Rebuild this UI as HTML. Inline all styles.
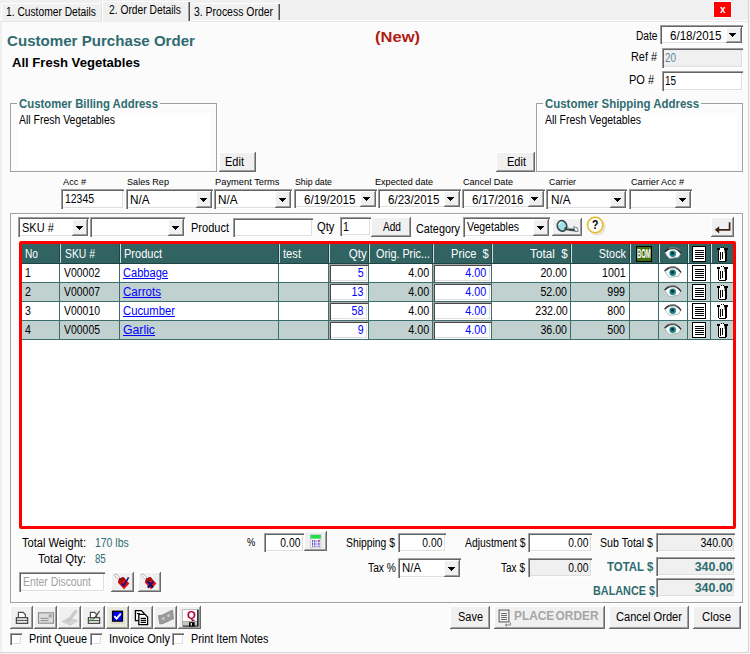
<!DOCTYPE html><html><head><meta charset="utf-8"><title>Customer Purchase Order</title><style>
html,body{margin:0;padding:0}body{width:750px;height:654px;position:relative;overflow:hidden;background:#f0f0f0;font-family:"Liberation Sans", sans-serif;font-size:12px}
#w div,#w svg,#w span{position:absolute;box-sizing:border-box}#w span{white-space:nowrap;line-height:1;transform-origin:0 0}
</style></head><body><div id="w">
<div style="left:0px;top:0px;width:750px;height:654px;background:#f0f0f0;"></div>
<div style="left:2px;top:22px;width:746px;height:630px;background:#fbfbfb;"></div>
<div style="left:0px;top:20px;width:748px;height:1px;background:#fff;"></div>
<div style="left:0px;top:21px;width:748px;height:1px;background:#e6e6e6;"></div>
<div style="left:748px;top:0px;width:1px;height:653px;background:#d4d4d4;"></div>
<div style="left:0px;top:652px;width:749px;height:1px;background:#d4d4d4;"></div>
<div style="left:749px;top:0px;width:1px;height:654px;background:#f6f6f6;"></div>
<div style="left:0px;top:653px;width:750px;height:1px;background:#f6f6f6;"></div>
<div style="left:1px;top:3px;width:101px;height:18px;background:#f0f0f0;border-top:1px solid #fff;border-left:1px solid #fff;border-right:1px solid #e0e0e0;"></div>
<div style="left:102px;top:1px;width:88px;height:21px;background:#f0f0f0;border-top:1px solid #fff;border-left:1px solid #fff;"></div>
<div style="left:188px;top:2px;width:1px;height:19px;background:#a0a0a0;"></div>
<div style="left:189px;top:2px;width:1px;height:19px;background:#505050;"></div>
<div style="left:190px;top:3px;width:90px;height:17px;background:#f0f0f0;border-top:1px solid #fff;"></div>
<div style="left:278px;top:4px;width:1px;height:16px;background:#a0a0a0;"></div>
<div style="left:279px;top:4px;width:1px;height:16px;background:#505050;"></div>
<div style="left:713px;top:1px;width:19px;height:17px;background:#ff0000;border:1px solid #fff;"></div>
<div style="left:660px;top:25px;width:83px;height:19px;background:#fff;box-shadow:inset 1px 1px 0 #a0a0a0, inset 2px 2px 0 #646464, inset -1px -1px 0 #fff, inset -2px -2px 0 #dedede;"></div>
<div style="left:726px;top:27px;width:16px;height:16px;background:#f0f0f0;box-shadow:inset -1px -1px 0 #696969, inset 1px 1px 0 #fff, inset -2px -2px 0 #a0a0a0;"></div>
<svg style="left:729px;top:33px" width="7" height="4" viewBox="0 0 7 4" shape-rendering="crispEdges"><path d="M0 0h7v1h-7zM1 1h5v1h-5zM2 2h3v1h-3zM3 3h1v1h-1z" fill="#000"/></svg>
<div style="left:662px;top:48px;width:81px;height:20px;background:#f0f0f0;box-shadow:inset 1px 1px 0 #a0a0a0, inset 2px 2px 0 #646464, inset -1px -1px 0 #fff, inset -2px -2px 0 #dedede;"></div>
<div style="left:662px;top:71px;width:81px;height:20px;background:#fff;box-shadow:inset 1px 1px 0 #a0a0a0, inset 2px 2px 0 #646464, inset -1px -1px 0 #fff, inset -2px -2px 0 #dedede;"></div>
<div style="left:10px;top:103px;width:207px;height:69px;border:1px solid #a0a0a0;box-shadow:inset 1px 1px 0 #fff, 1px 1px 0 #fff;"></div>
<div style="left:17px;top:97px;width:143px;height:12px;background:#fbfbfb;"></div>
<div style="left:17px;top:113px;width:193px;height:56px;background:#fff;"></div>
<div style="left:536px;top:103px;width:207px;height:69px;border:1px solid #a0a0a0;box-shadow:inset 1px 1px 0 #fff, 1px 1px 0 #fff;"></div>
<div style="left:543px;top:97px;width:158px;height:12px;background:#fbfbfb;"></div>
<div style="left:543px;top:113px;width:194px;height:56px;background:#fff;"></div>
<div style="left:219px;top:152px;width:37px;height:20px;background:#f0f0f0;box-shadow:inset -1px -1px 0 #696969, inset 1px 1px 0 #fff, inset -2px -2px 0 #a0a0a0;"></div>
<div style="left:496px;top:152px;width:39px;height:20px;background:#f0f0f0;box-shadow:inset -1px -1px 0 #696969, inset 1px 1px 0 #fff, inset -2px -2px 0 #a0a0a0;"></div>
<div style="left:61px;top:189px;width:63px;height:20px;background:#fff;box-shadow:inset 1px 1px 0 #a0a0a0, inset 2px 2px 0 #646464, inset -1px -1px 0 #fff, inset -2px -2px 0 #dedede;"></div>
<div style="left:126px;top:189px;width:87px;height:20px;background:#fff;box-shadow:inset 1px 1px 0 #a0a0a0, inset 2px 2px 0 #646464, inset -1px -1px 0 #fff, inset -2px -2px 0 #dedede;"></div>
<div style="left:196px;top:191px;width:16px;height:17px;background:#f0f0f0;box-shadow:inset -1px -1px 0 #696969, inset 1px 1px 0 #fff, inset -2px -2px 0 #a0a0a0;"></div>
<svg style="left:200px;top:198px" width="7" height="4" viewBox="0 0 7 4" shape-rendering="crispEdges"><path d="M0 0h7v1h-7zM1 1h5v1h-5zM2 2h3v1h-3zM3 3h1v1h-1z" fill="#000"/></svg>
<div style="left:214px;top:189px;width:78px;height:20px;background:#fff;box-shadow:inset 1px 1px 0 #a0a0a0, inset 2px 2px 0 #646464, inset -1px -1px 0 #fff, inset -2px -2px 0 #dedede;"></div>
<div style="left:275px;top:191px;width:16px;height:17px;background:#f0f0f0;box-shadow:inset -1px -1px 0 #696969, inset 1px 1px 0 #fff, inset -2px -2px 0 #a0a0a0;"></div>
<svg style="left:279px;top:198px" width="7" height="4" viewBox="0 0 7 4" shape-rendering="crispEdges"><path d="M0 0h7v1h-7zM1 1h5v1h-5zM2 2h3v1h-3zM3 3h1v1h-1z" fill="#000"/></svg>
<div style="left:294px;top:189px;width:83px;height:19px;background:#fff;box-shadow:inset 1px 1px 0 #a0a0a0, inset 2px 2px 0 #646464, inset -1px -1px 0 #fff, inset -2px -2px 0 #dedede;"></div>
<div style="left:360px;top:191px;width:16px;height:16px;background:#f0f0f0;box-shadow:inset -1px -1px 0 #696969, inset 1px 1px 0 #fff, inset -2px -2px 0 #a0a0a0;"></div>
<svg style="left:363px;top:197px" width="7" height="4" viewBox="0 0 7 4" shape-rendering="crispEdges"><path d="M0 0h7v1h-7zM1 1h5v1h-5zM2 2h3v1h-3zM3 3h1v1h-1z" fill="#000"/></svg>
<div style="left:378px;top:189px;width:83px;height:19px;background:#fff;box-shadow:inset 1px 1px 0 #a0a0a0, inset 2px 2px 0 #646464, inset -1px -1px 0 #fff, inset -2px -2px 0 #dedede;"></div>
<div style="left:444px;top:191px;width:16px;height:16px;background:#f0f0f0;box-shadow:inset -1px -1px 0 #696969, inset 1px 1px 0 #fff, inset -2px -2px 0 #a0a0a0;"></div>
<svg style="left:447px;top:197px" width="7" height="4" viewBox="0 0 7 4" shape-rendering="crispEdges"><path d="M0 0h7v1h-7zM1 1h5v1h-5zM2 2h3v1h-3zM3 3h1v1h-1z" fill="#000"/></svg>
<div style="left:462px;top:189px;width:83px;height:19px;background:#fff;box-shadow:inset 1px 1px 0 #a0a0a0, inset 2px 2px 0 #646464, inset -1px -1px 0 #fff, inset -2px -2px 0 #dedede;"></div>
<div style="left:528px;top:191px;width:16px;height:16px;background:#f0f0f0;box-shadow:inset -1px -1px 0 #696969, inset 1px 1px 0 #fff, inset -2px -2px 0 #a0a0a0;"></div>
<svg style="left:531px;top:197px" width="7" height="4" viewBox="0 0 7 4" shape-rendering="crispEdges"><path d="M0 0h7v1h-7zM1 1h5v1h-5zM2 2h3v1h-3zM3 3h1v1h-1z" fill="#000"/></svg>
<div style="left:546px;top:189px;width:81px;height:20px;background:#fff;box-shadow:inset 1px 1px 0 #a0a0a0, inset 2px 2px 0 #646464, inset -1px -1px 0 #fff, inset -2px -2px 0 #dedede;"></div>
<div style="left:610px;top:191px;width:16px;height:17px;background:#f0f0f0;box-shadow:inset -1px -1px 0 #696969, inset 1px 1px 0 #fff, inset -2px -2px 0 #a0a0a0;"></div>
<svg style="left:614px;top:198px" width="7" height="4" viewBox="0 0 7 4" shape-rendering="crispEdges"><path d="M0 0h7v1h-7zM1 1h5v1h-5zM2 2h3v1h-3zM3 3h1v1h-1z" fill="#000"/></svg>
<div style="left:629px;top:189px;width:63px;height:20px;background:#fff;box-shadow:inset 1px 1px 0 #a0a0a0, inset 2px 2px 0 #646464, inset -1px -1px 0 #fff, inset -2px -2px 0 #dedede;"></div>
<div style="left:675px;top:191px;width:16px;height:17px;background:#f0f0f0;box-shadow:inset -1px -1px 0 #696969, inset 1px 1px 0 #fff, inset -2px -2px 0 #a0a0a0;"></div>
<svg style="left:679px;top:198px" width="7" height="4" viewBox="0 0 7 4" shape-rendering="crispEdges"><path d="M0 0h7v1h-7zM1 1h5v1h-5zM2 2h3v1h-3zM3 3h1v1h-1z" fill="#000"/></svg>
<div style="left:10px;top:213px;width:733px;height:390px;border:1px solid #a0a0a0;box-shadow:inset 1px 1px 0 #fff, 1px 1px 0 #fff;"></div>
<div style="left:18px;top:217px;width:71px;height:20px;background:#fff;box-shadow:inset 1px 1px 0 #a0a0a0, inset 2px 2px 0 #646464, inset -1px -1px 0 #fff, inset -2px -2px 0 #dedede;"></div>
<div style="left:72px;top:219px;width:16px;height:17px;background:#f0f0f0;box-shadow:inset -1px -1px 0 #696969, inset 1px 1px 0 #fff, inset -2px -2px 0 #a0a0a0;"></div>
<svg style="left:76px;top:226px" width="7" height="4" viewBox="0 0 7 4" shape-rendering="crispEdges"><path d="M0 0h7v1h-7zM1 1h5v1h-5zM2 2h3v1h-3zM3 3h1v1h-1z" fill="#000"/></svg>
<div style="left:90px;top:217px;width:95px;height:20px;background:#fff;box-shadow:inset 1px 1px 0 #a0a0a0, inset 2px 2px 0 #646464, inset -1px -1px 0 #fff, inset -2px -2px 0 #dedede;"></div>
<div style="left:168px;top:219px;width:16px;height:17px;background:#f0f0f0;box-shadow:inset -1px -1px 0 #696969, inset 1px 1px 0 #fff, inset -2px -2px 0 #a0a0a0;"></div>
<svg style="left:172px;top:226px" width="7" height="4" viewBox="0 0 7 4" shape-rendering="crispEdges"><path d="M0 0h7v1h-7zM1 1h5v1h-5zM2 2h3v1h-3zM3 3h1v1h-1z" fill="#000"/></svg>
<div style="left:233px;top:218px;width:80px;height:19px;background:#fff;box-shadow:inset 1px 1px 0 #a0a0a0, inset 2px 2px 0 #646464, inset -1px -1px 0 #fff, inset -2px -2px 0 #dedede;"></div>
<div style="left:340px;top:217px;width:31px;height:19px;background:#fff;box-shadow:inset 1px 1px 0 #a0a0a0, inset 2px 2px 0 #646464, inset -1px -1px 0 #fff, inset -2px -2px 0 #dedede;"></div>
<div style="left:371px;top:217px;width:40px;height:20px;background:#f0f0f0;box-shadow:inset -1px -1px 0 #696969, inset 1px 1px 0 #fff, inset -2px -2px 0 #a0a0a0;"></div>
<div style="left:463px;top:217px;width:87px;height:20px;background:#fff;box-shadow:inset 1px 1px 0 #a0a0a0, inset 2px 2px 0 #646464, inset -1px -1px 0 #fff, inset -2px -2px 0 #dedede;"></div>
<div style="left:533px;top:219px;width:16px;height:17px;background:#f0f0f0;box-shadow:inset -1px -1px 0 #696969, inset 1px 1px 0 #fff, inset -2px -2px 0 #a0a0a0;"></div>
<svg style="left:537px;top:226px" width="7" height="4" viewBox="0 0 7 4" shape-rendering="crispEdges"><path d="M0 0h7v1h-7zM1 1h5v1h-5zM2 2h3v1h-3zM3 3h1v1h-1z" fill="#000"/></svg>
<div style="left:552px;top:218px;width:30px;height:18px;background:#f0f0f0;box-shadow:inset -1px -1px 0 #696969, inset 1px 1px 0 #fff, inset -2px -2px 0 #a0a0a0;"></div>
<div style="left:711px;top:217px;width:23px;height:20px;background:#f0f0f0;box-shadow:inset -1px -1px 0 #696969, inset 1px 1px 0 #fff, inset -2px -2px 0 #a0a0a0;"></div>
<div style="left:19px;top:241px;width:717px;height:288px;background:#fff;border:3px solid #ff0000;border-radius:2px;"></div>
<div style="left:22px;top:244px;width:711px;height:20px;background:#316363;border-bottom:1px solid #1f4444;"></div>
<div style="left:59px;top:244px;width:1px;height:19px;background:#1f4444;"></div>
<div style="left:60px;top:244px;width:1px;height:19px;background:#cfdcdc;"></div>
<div style="left:119px;top:244px;width:1px;height:19px;background:#1f4444;"></div>
<div style="left:120px;top:244px;width:1px;height:19px;background:#cfdcdc;"></div>
<div style="left:278px;top:244px;width:1px;height:19px;background:#1f4444;"></div>
<div style="left:279px;top:244px;width:1px;height:19px;background:#cfdcdc;"></div>
<div style="left:328px;top:244px;width:1px;height:19px;background:#1f4444;"></div>
<div style="left:329px;top:244px;width:1px;height:19px;background:#cfdcdc;"></div>
<div style="left:368px;top:244px;width:1px;height:19px;background:#1f4444;"></div>
<div style="left:369px;top:244px;width:1px;height:19px;background:#cfdcdc;"></div>
<div style="left:432px;top:244px;width:1px;height:19px;background:#1f4444;"></div>
<div style="left:433px;top:244px;width:1px;height:19px;background:#cfdcdc;"></div>
<div style="left:491px;top:244px;width:1px;height:19px;background:#1f4444;"></div>
<div style="left:492px;top:244px;width:1px;height:19px;background:#cfdcdc;"></div>
<div style="left:570px;top:244px;width:1px;height:19px;background:#1f4444;"></div>
<div style="left:571px;top:244px;width:1px;height:19px;background:#cfdcdc;"></div>
<div style="left:629px;top:244px;width:1px;height:19px;background:#1f4444;"></div>
<div style="left:630px;top:244px;width:1px;height:19px;background:#cfdcdc;"></div>
<div style="left:658px;top:244px;width:1px;height:19px;background:#1f4444;"></div>
<div style="left:659px;top:244px;width:1px;height:19px;background:#cfdcdc;"></div>
<div style="left:687px;top:244px;width:1px;height:19px;background:#1f4444;"></div>
<div style="left:688px;top:244px;width:1px;height:19px;background:#cfdcdc;"></div>
<div style="left:710px;top:244px;width:1px;height:19px;background:#1f4444;"></div>
<div style="left:711px;top:244px;width:1px;height:19px;background:#cfdcdc;"></div>
<div style="left:22px;top:264px;width:711px;height:19px;background:#fff;border-bottom:1px solid #3b6d6d;"></div>
<div style="left:59px;top:264px;width:1px;height:19px;background:#3b6d6d;"></div>
<div style="left:119px;top:264px;width:1px;height:19px;background:#3b6d6d;"></div>
<div style="left:278px;top:264px;width:1px;height:19px;background:#3b6d6d;"></div>
<div style="left:328px;top:264px;width:1px;height:19px;background:#3b6d6d;"></div>
<div style="left:368px;top:264px;width:1px;height:19px;background:#3b6d6d;"></div>
<div style="left:432px;top:264px;width:1px;height:19px;background:#3b6d6d;"></div>
<div style="left:491px;top:264px;width:1px;height:19px;background:#3b6d6d;"></div>
<div style="left:570px;top:264px;width:1px;height:19px;background:#3b6d6d;"></div>
<div style="left:629px;top:264px;width:1px;height:19px;background:#3b6d6d;"></div>
<div style="left:658px;top:264px;width:1px;height:19px;background:#3b6d6d;"></div>
<div style="left:687px;top:264px;width:1px;height:19px;background:#3b6d6d;"></div>
<div style="left:710px;top:264px;width:1px;height:19px;background:#3b6d6d;"></div>
<div style="left:329px;top:264px;width:39px;height:18px;background:#fff;box-shadow:inset 1px 1px 0 #a8a8a8, inset 2px 2px 0 #484848, inset -1px -1px 0 #fff, inset -2px -2px 0 #dedede;"></div>
<div style="left:433px;top:264px;width:58px;height:18px;background:#fff;box-shadow:inset 1px 1px 0 #a8a8a8, inset 2px 2px 0 #484848, inset -1px -1px 0 #fff, inset -2px -2px 0 #dedede;"></div>
<div style="left:22px;top:283px;width:711px;height:19px;background:#c1d1d0;border-bottom:1px solid #3b6d6d;"></div>
<div style="left:59px;top:283px;width:1px;height:19px;background:#3b6d6d;"></div>
<div style="left:119px;top:283px;width:1px;height:19px;background:#3b6d6d;"></div>
<div style="left:278px;top:283px;width:1px;height:19px;background:#3b6d6d;"></div>
<div style="left:328px;top:283px;width:1px;height:19px;background:#3b6d6d;"></div>
<div style="left:368px;top:283px;width:1px;height:19px;background:#3b6d6d;"></div>
<div style="left:432px;top:283px;width:1px;height:19px;background:#3b6d6d;"></div>
<div style="left:491px;top:283px;width:1px;height:19px;background:#3b6d6d;"></div>
<div style="left:570px;top:283px;width:1px;height:19px;background:#3b6d6d;"></div>
<div style="left:629px;top:283px;width:1px;height:19px;background:#3b6d6d;"></div>
<div style="left:658px;top:283px;width:1px;height:19px;background:#3b6d6d;"></div>
<div style="left:687px;top:283px;width:1px;height:19px;background:#3b6d6d;"></div>
<div style="left:710px;top:283px;width:1px;height:19px;background:#3b6d6d;"></div>
<div style="left:329px;top:283px;width:39px;height:18px;background:#fff;box-shadow:inset 1px 1px 0 #a8a8a8, inset 2px 2px 0 #484848, inset -1px -1px 0 #fff, inset -2px -2px 0 #dedede;"></div>
<div style="left:433px;top:283px;width:58px;height:18px;background:#fff;box-shadow:inset 1px 1px 0 #a8a8a8, inset 2px 2px 0 #484848, inset -1px -1px 0 #fff, inset -2px -2px 0 #dedede;"></div>
<div style="left:22px;top:302px;width:711px;height:19px;background:#fff;border-bottom:1px solid #3b6d6d;"></div>
<div style="left:59px;top:302px;width:1px;height:19px;background:#3b6d6d;"></div>
<div style="left:119px;top:302px;width:1px;height:19px;background:#3b6d6d;"></div>
<div style="left:278px;top:302px;width:1px;height:19px;background:#3b6d6d;"></div>
<div style="left:328px;top:302px;width:1px;height:19px;background:#3b6d6d;"></div>
<div style="left:368px;top:302px;width:1px;height:19px;background:#3b6d6d;"></div>
<div style="left:432px;top:302px;width:1px;height:19px;background:#3b6d6d;"></div>
<div style="left:491px;top:302px;width:1px;height:19px;background:#3b6d6d;"></div>
<div style="left:570px;top:302px;width:1px;height:19px;background:#3b6d6d;"></div>
<div style="left:629px;top:302px;width:1px;height:19px;background:#3b6d6d;"></div>
<div style="left:658px;top:302px;width:1px;height:19px;background:#3b6d6d;"></div>
<div style="left:687px;top:302px;width:1px;height:19px;background:#3b6d6d;"></div>
<div style="left:710px;top:302px;width:1px;height:19px;background:#3b6d6d;"></div>
<div style="left:329px;top:302px;width:39px;height:18px;background:#fff;box-shadow:inset 1px 1px 0 #a8a8a8, inset 2px 2px 0 #484848, inset -1px -1px 0 #fff, inset -2px -2px 0 #dedede;"></div>
<div style="left:433px;top:302px;width:58px;height:18px;background:#fff;box-shadow:inset 1px 1px 0 #a8a8a8, inset 2px 2px 0 #484848, inset -1px -1px 0 #fff, inset -2px -2px 0 #dedede;"></div>
<div style="left:22px;top:321px;width:711px;height:19px;background:#c1d1d0;border-bottom:1px solid #3b6d6d;"></div>
<div style="left:59px;top:321px;width:1px;height:19px;background:#3b6d6d;"></div>
<div style="left:119px;top:321px;width:1px;height:19px;background:#3b6d6d;"></div>
<div style="left:278px;top:321px;width:1px;height:19px;background:#3b6d6d;"></div>
<div style="left:328px;top:321px;width:1px;height:19px;background:#3b6d6d;"></div>
<div style="left:368px;top:321px;width:1px;height:19px;background:#3b6d6d;"></div>
<div style="left:432px;top:321px;width:1px;height:19px;background:#3b6d6d;"></div>
<div style="left:491px;top:321px;width:1px;height:19px;background:#3b6d6d;"></div>
<div style="left:570px;top:321px;width:1px;height:19px;background:#3b6d6d;"></div>
<div style="left:629px;top:321px;width:1px;height:19px;background:#3b6d6d;"></div>
<div style="left:658px;top:321px;width:1px;height:19px;background:#3b6d6d;"></div>
<div style="left:687px;top:321px;width:1px;height:19px;background:#3b6d6d;"></div>
<div style="left:710px;top:321px;width:1px;height:19px;background:#3b6d6d;"></div>
<div style="left:329px;top:321px;width:39px;height:18px;background:#fff;box-shadow:inset 1px 1px 0 #a8a8a8, inset 2px 2px 0 #484848, inset -1px -1px 0 #fff, inset -2px -2px 0 #dedede;"></div>
<div style="left:433px;top:321px;width:58px;height:18px;background:#fff;box-shadow:inset 1px 1px 0 #a8a8a8, inset 2px 2px 0 #484848, inset -1px -1px 0 #fff, inset -2px -2px 0 #dedede;"></div>
<div style="left:19px;top:572px;width:86px;height:20px;background:#fff;box-shadow:inset 1px 1px 0 #a0a0a0, inset 2px 2px 0 #646464, inset -1px -1px 0 #fff, inset -2px -2px 0 #dedede;"></div>
<div style="left:111px;top:572px;width:23px;height:20px;background:#f0f0f0;box-shadow:inset -1px -1px 0 #696969, inset 1px 1px 0 #fff, inset -2px -2px 0 #a0a0a0;"></div>
<div style="left:138px;top:572px;width:23px;height:20px;background:#f0f0f0;box-shadow:inset -1px -1px 0 #696969, inset 1px 1px 0 #fff, inset -2px -2px 0 #a0a0a0;"></div>
<div style="left:264px;top:533px;width:40px;height:19px;background:#fff;box-shadow:inset 1px 1px 0 #a0a0a0, inset 2px 2px 0 #646464, inset -1px -1px 0 #fff, inset -2px -2px 0 #dedede;"></div>
<div style="left:304px;top:531px;width:23px;height:20px;background:#f0f0f0;box-shadow:inset -1px -1px 0 #696969, inset 1px 1px 0 #fff, inset -2px -2px 0 #a0a0a0;"></div>
<div style="left:398px;top:533px;width:48px;height:19px;background:#fff;box-shadow:inset 1px 1px 0 #a0a0a0, inset 2px 2px 0 #646464, inset -1px -1px 0 #fff, inset -2px -2px 0 #dedede;"></div>
<div style="left:398px;top:558px;width:63px;height:20px;background:#fff;box-shadow:inset 1px 1px 0 #a0a0a0, inset 2px 2px 0 #646464, inset -1px -1px 0 #fff, inset -2px -2px 0 #dedede;"></div>
<div style="left:444px;top:560px;width:16px;height:17px;background:#f0f0f0;box-shadow:inset -1px -1px 0 #696969, inset 1px 1px 0 #fff, inset -2px -2px 0 #a0a0a0;"></div>
<svg style="left:448px;top:567px" width="7" height="4" viewBox="0 0 7 4" shape-rendering="crispEdges"><path d="M0 0h7v1h-7zM1 1h5v1h-5zM2 2h3v1h-3zM3 3h1v1h-1z" fill="#000"/></svg>
<div style="left:528px;top:533px;width:64px;height:19px;background:#fff;box-shadow:inset 1px 1px 0 #a0a0a0, inset 2px 2px 0 #646464, inset -1px -1px 0 #fff, inset -2px -2px 0 #dedede;"></div>
<div style="left:528px;top:558px;width:64px;height:19px;background:#f0f0f0;box-shadow:inset 1px 1px 0 #a0a0a0, inset 2px 2px 0 #646464, inset -1px -1px 0 #fff, inset -2px -2px 0 #dedede;"></div>
<div style="left:656px;top:533px;width:79px;height:19px;background:#f0f0f0;box-shadow:inset 1px 1px 0 #a0a0a0, inset 2px 2px 0 #646464, inset -1px -1px 0 #fff, inset -2px -2px 0 #dedede;"></div>
<div style="left:656px;top:557px;width:79px;height:19px;background:#f0f0f0;box-shadow:inset 1px 1px 0 #a0a0a0, inset 2px 2px 0 #646464, inset -1px -1px 0 #fff, inset -2px -2px 0 #dedede;"></div>
<div style="left:656px;top:578px;width:79px;height:19px;background:#f0f0f0;box-shadow:inset 1px 1px 0 #a0a0a0, inset 2px 2px 0 #646464, inset -1px -1px 0 #fff, inset -2px -2px 0 #dedede;"></div>
<div style="left:10px;top:606px;width:23px;height:23px;background:#f0f0f0;box-shadow:inset -1px -1px 0 #696969, inset 1px 1px 0 #fff, inset -2px -2px 0 #a0a0a0;"></div>
<div style="left:34px;top:606px;width:23px;height:23px;background:#f0f0f0;box-shadow:inset -1px -1px 0 #696969, inset 1px 1px 0 #fff, inset -2px -2px 0 #a0a0a0;"></div>
<div style="left:58px;top:606px;width:23px;height:23px;background:#f0f0f0;box-shadow:inset -1px -1px 0 #696969, inset 1px 1px 0 #fff, inset -2px -2px 0 #a0a0a0;"></div>
<div style="left:82px;top:606px;width:23px;height:23px;background:#f0f0f0;box-shadow:inset -1px -1px 0 #696969, inset 1px 1px 0 #fff, inset -2px -2px 0 #a0a0a0;"></div>
<div style="left:106px;top:606px;width:23px;height:23px;background:#f0f0f0;box-shadow:inset -1px -1px 0 #696969, inset 1px 1px 0 #fff, inset -2px -2px 0 #a0a0a0;"></div>
<div style="left:130px;top:606px;width:23px;height:23px;background:#f0f0f0;box-shadow:inset -1px -1px 0 #696969, inset 1px 1px 0 #fff, inset -2px -2px 0 #a0a0a0;"></div>
<div style="left:154px;top:606px;width:23px;height:23px;background:#f0f0f0;box-shadow:inset -1px -1px 0 #696969, inset 1px 1px 0 #fff, inset -2px -2px 0 #a0a0a0;"></div>
<div style="left:178px;top:606px;width:23px;height:23px;background:#f0f0f0;box-shadow:inset -1px -1px 0 #696969, inset 1px 1px 0 #fff, inset -2px -2px 0 #a0a0a0;"></div>
<div style="left:450px;top:606px;width:40px;height:23px;background:#f0f0f0;box-shadow:inset -1px -1px 0 #696969, inset 1px 1px 0 #fff, inset -2px -2px 0 #a0a0a0;"></div>
<div style="left:494px;top:606px;width:111px;height:23px;background:#f0f0f0;box-shadow:inset -1px -1px 0 #696969, inset 1px 1px 0 #fff, inset -2px -2px 0 #a0a0a0;"></div>
<div style="left:609px;top:606px;width:80px;height:23px;background:#f0f0f0;box-shadow:inset -1px -1px 0 #696969, inset 1px 1px 0 #fff, inset -2px -2px 0 #a0a0a0;"></div>
<div style="left:693px;top:606px;width:48px;height:23px;background:#f0f0f0;box-shadow:inset -1px -1px 0 #696969, inset 1px 1px 0 #fff, inset -2px -2px 0 #a0a0a0;"></div>
<div style="left:10px;top:633px;width:12px;height:12px;background:#fff;box-shadow:inset 1px 1px 0 #a0a0a0, inset 2px 2px 0 #646464, inset -1px -1px 0 #fff, inset -2px -2px 0 #dedede;"></div>
<div style="left:90px;top:633px;width:12px;height:12px;background:#fff;box-shadow:inset 1px 1px 0 #a0a0a0, inset 2px 2px 0 #646464, inset -1px -1px 0 #fff, inset -2px -2px 0 #dedede;"></div>
<div style="left:172px;top:633px;width:12px;height:12px;background:#fff;box-shadow:inset 1px 1px 0 #a0a0a0, inset 2px 2px 0 #646464, inset -1px -1px 0 #fff, inset -2px -2px 0 #dedede;"></div>
<svg style="left:552px;top:218px" width="30" height="18" viewBox="0 0 30 18"><ellipse cx="10" cy="7.9" rx="4.7" ry="5.3" transform="rotate(-20 10 7.9)" fill="#a2dfe8" stroke="#38484a" stroke-width="1.6"/><path d="M7 7a3.4 3.4 0 0 1 3.4-3" stroke="#e4fbff" stroke-width="1.1" fill="none"/><path d="M13.6 10.6L18.6 11.6L23.6 12" stroke="#38484a" stroke-width="2.8" fill="none" stroke-linecap="round"/><path d="M15 10.4L22 10.6" stroke="#8fb9b4" stroke-width="0.8" fill="none"/><path d="M21.6 8.6l3.6 1.2l1 3.6l-3 0.2z" fill="#f6f6f6" stroke="#4a5658" stroke-width="0.7"/></svg>
<svg style="left:584px;top:214px" width="26" height="26" viewBox="0 0 26 26"><circle cx="13" cy="13" r="8.6" fill="#e9e1cd" opacity="0.9"/><circle cx="11.2" cy="11" r="7.7" fill="#fffef8" stroke="#e3b92b" stroke-width="1.5"/></svg>
<svg style="left:712px;top:217px" width="22" height="20" viewBox="0 0 22 20"><path d="M17.6 5.2V12.8H6.5" stroke="#3b2415" stroke-width="1.7" fill="none"/><path d="M2.8 12.8L7.2 9.2V16.6z" fill="#3b2415"/></svg>
<div style="left:636px;top:246px;width:16px;height:16px;background:#3f7010;border:1px solid #000;"></div>
<svg style="left:664px;top:247px" width="18" height="13" viewBox="0 0 18 13"><path d="M1 5.6C3 3 6 2 8.6 2C11.6 2 14.4 3.4 16.8 6.4L14.4 10.2L5.6 11.4L2.8 8.4z" fill="#fdfdfd" stroke="#a4a4a4" stroke-width="0.8"/><circle cx="8.7" cy="6.7" r="3.3" fill="#17868a"/><circle cx="8.5" cy="6.3" r="1.5" fill="#0c2c2e"/><path d="M0.6 5.2C3.4 1.8 6.4 1 9 1C12.2 1 14.6 2.8 17 6.4" stroke="#262626" stroke-width="1.3" fill="none"/><path d="M4.6 1.6C7.6 0.2 11.8 0.4 15.6 3" stroke="#c8c8c8" stroke-width="0.7" fill="none"/></svg>
<svg style="left:692px;top:246px" width="14" height="16" viewBox="0 0 14 16" shape-rendering="crispEdges"><rect x="0.65" y="0.65" width="12.7" height="14.7" fill="#fff" stroke="#000" stroke-width="1.3"/><path d="M2.5 4.5h9M2.5 6.5h9M2.5 8.5h9M2.5 10.5h9M2.5 12.5h9" stroke="#000" stroke-width="1"/></svg>
<svg style="left:717px;top:247px" width="11" height="15" viewBox="0 0 11 15" shape-rendering="crispEdges"><rect x="2" y="2" width="7" height="12" fill="#fff"/><rect x="4" y="0" width="1" height="1" fill="#000"/><rect x="6" y="0" width="1" height="1" fill="#000"/><rect x="0" y="1" width="11" height="2" fill="#000"/><rect x="3" y="1" width="4" height="2" fill="#fff"/><rect x="3" y="1.6" width="4" height="0.7" fill="#bbb"/><rect x="1" y="3" width="1" height="11.4" fill="#000"/><rect x="8" y="3" width="2" height="11.4" fill="#000"/><rect x="7.4" y="3.4" width="0.8" height="2.6" fill="#999"/><rect x="2" y="13.8" width="7" height="1.2" fill="#000"/><rect x="3" y="5" width="1" height="8" fill="#000"/><rect x="5" y="5" width="1" height="7" fill="#000"/></svg>
<svg style="left:664px;top:266px" width="18" height="13" viewBox="0 0 18 13"><path d="M1 5.6C3 3 6 2 8.6 2C11.6 2 14.4 3.4 16.8 6.4L14.4 10.2L5.6 11.4L2.8 8.4z" fill="#fdfdfd" stroke="#a4a4a4" stroke-width="0.8"/><circle cx="8.7" cy="6.7" r="3.3" fill="#17868a"/><circle cx="8.5" cy="6.3" r="1.5" fill="#0c2c2e"/><path d="M0.6 5.2C3.4 1.8 6.4 1 9 1C12.2 1 14.6 2.8 17 6.4" stroke="#262626" stroke-width="1.3" fill="none"/><path d="M4.6 1.6C7.6 0.2 11.8 0.4 15.6 3" stroke="#c8c8c8" stroke-width="0.7" fill="none"/></svg>
<svg style="left:692px;top:265px" width="14" height="16" viewBox="0 0 14 16" shape-rendering="crispEdges"><rect x="0.65" y="0.65" width="12.7" height="14.7" fill="#fff" stroke="#000" stroke-width="1.3"/><path d="M2.5 4.5h9M2.5 6.5h9M2.5 8.5h9M2.5 10.5h9M2.5 12.5h9" stroke="#000" stroke-width="1"/></svg>
<svg style="left:717px;top:266px" width="11" height="15" viewBox="0 0 11 15" shape-rendering="crispEdges"><rect x="2" y="2" width="7" height="12" fill="#fff"/><rect x="4" y="0" width="1" height="1" fill="#000"/><rect x="6" y="0" width="1" height="1" fill="#000"/><rect x="0" y="1" width="11" height="2" fill="#000"/><rect x="3" y="1" width="4" height="2" fill="#fff"/><rect x="3" y="1.6" width="4" height="0.7" fill="#bbb"/><rect x="1" y="3" width="1" height="11.4" fill="#000"/><rect x="8" y="3" width="2" height="11.4" fill="#000"/><rect x="7.4" y="3.4" width="0.8" height="2.6" fill="#999"/><rect x="2" y="13.8" width="7" height="1.2" fill="#000"/><rect x="3" y="5" width="1" height="8" fill="#000"/><rect x="5" y="5" width="1" height="7" fill="#000"/></svg>
<svg style="left:664px;top:285px" width="18" height="13" viewBox="0 0 18 13"><path d="M1 5.6C3 3 6 2 8.6 2C11.6 2 14.4 3.4 16.8 6.4L14.4 10.2L5.6 11.4L2.8 8.4z" fill="#fdfdfd" stroke="#a4a4a4" stroke-width="0.8"/><circle cx="8.7" cy="6.7" r="3.3" fill="#17868a"/><circle cx="8.5" cy="6.3" r="1.5" fill="#0c2c2e"/><path d="M0.6 5.2C3.4 1.8 6.4 1 9 1C12.2 1 14.6 2.8 17 6.4" stroke="#262626" stroke-width="1.3" fill="none"/><path d="M4.6 1.6C7.6 0.2 11.8 0.4 15.6 3" stroke="#c8c8c8" stroke-width="0.7" fill="none"/></svg>
<svg style="left:692px;top:284px" width="14" height="16" viewBox="0 0 14 16" shape-rendering="crispEdges"><rect x="0.65" y="0.65" width="12.7" height="14.7" fill="#fff" stroke="#000" stroke-width="1.3"/><path d="M2.5 4.5h9M2.5 6.5h9M2.5 8.5h9M2.5 10.5h9M2.5 12.5h9" stroke="#000" stroke-width="1"/></svg>
<svg style="left:717px;top:285px" width="11" height="15" viewBox="0 0 11 15" shape-rendering="crispEdges"><rect x="2" y="2" width="7" height="12" fill="#fff"/><rect x="4" y="0" width="1" height="1" fill="#000"/><rect x="6" y="0" width="1" height="1" fill="#000"/><rect x="0" y="1" width="11" height="2" fill="#000"/><rect x="3" y="1" width="4" height="2" fill="#fff"/><rect x="3" y="1.6" width="4" height="0.7" fill="#bbb"/><rect x="1" y="3" width="1" height="11.4" fill="#000"/><rect x="8" y="3" width="2" height="11.4" fill="#000"/><rect x="7.4" y="3.4" width="0.8" height="2.6" fill="#999"/><rect x="2" y="13.8" width="7" height="1.2" fill="#000"/><rect x="3" y="5" width="1" height="8" fill="#000"/><rect x="5" y="5" width="1" height="7" fill="#000"/></svg>
<svg style="left:664px;top:304px" width="18" height="13" viewBox="0 0 18 13"><path d="M1 5.6C3 3 6 2 8.6 2C11.6 2 14.4 3.4 16.8 6.4L14.4 10.2L5.6 11.4L2.8 8.4z" fill="#fdfdfd" stroke="#a4a4a4" stroke-width="0.8"/><circle cx="8.7" cy="6.7" r="3.3" fill="#17868a"/><circle cx="8.5" cy="6.3" r="1.5" fill="#0c2c2e"/><path d="M0.6 5.2C3.4 1.8 6.4 1 9 1C12.2 1 14.6 2.8 17 6.4" stroke="#262626" stroke-width="1.3" fill="none"/><path d="M4.6 1.6C7.6 0.2 11.8 0.4 15.6 3" stroke="#c8c8c8" stroke-width="0.7" fill="none"/></svg>
<svg style="left:692px;top:303px" width="14" height="16" viewBox="0 0 14 16" shape-rendering="crispEdges"><rect x="0.65" y="0.65" width="12.7" height="14.7" fill="#fff" stroke="#000" stroke-width="1.3"/><path d="M2.5 4.5h9M2.5 6.5h9M2.5 8.5h9M2.5 10.5h9M2.5 12.5h9" stroke="#000" stroke-width="1"/></svg>
<svg style="left:717px;top:304px" width="11" height="15" viewBox="0 0 11 15" shape-rendering="crispEdges"><rect x="2" y="2" width="7" height="12" fill="#fff"/><rect x="4" y="0" width="1" height="1" fill="#000"/><rect x="6" y="0" width="1" height="1" fill="#000"/><rect x="0" y="1" width="11" height="2" fill="#000"/><rect x="3" y="1" width="4" height="2" fill="#fff"/><rect x="3" y="1.6" width="4" height="0.7" fill="#bbb"/><rect x="1" y="3" width="1" height="11.4" fill="#000"/><rect x="8" y="3" width="2" height="11.4" fill="#000"/><rect x="7.4" y="3.4" width="0.8" height="2.6" fill="#999"/><rect x="2" y="13.8" width="7" height="1.2" fill="#000"/><rect x="3" y="5" width="1" height="8" fill="#000"/><rect x="5" y="5" width="1" height="7" fill="#000"/></svg>
<svg style="left:664px;top:323px" width="18" height="13" viewBox="0 0 18 13"><path d="M1 5.6C3 3 6 2 8.6 2C11.6 2 14.4 3.4 16.8 6.4L14.4 10.2L5.6 11.4L2.8 8.4z" fill="#fdfdfd" stroke="#a4a4a4" stroke-width="0.8"/><circle cx="8.7" cy="6.7" r="3.3" fill="#17868a"/><circle cx="8.5" cy="6.3" r="1.5" fill="#0c2c2e"/><path d="M0.6 5.2C3.4 1.8 6.4 1 9 1C12.2 1 14.6 2.8 17 6.4" stroke="#262626" stroke-width="1.3" fill="none"/><path d="M4.6 1.6C7.6 0.2 11.8 0.4 15.6 3" stroke="#c8c8c8" stroke-width="0.7" fill="none"/></svg>
<svg style="left:692px;top:322px" width="14" height="16" viewBox="0 0 14 16" shape-rendering="crispEdges"><rect x="0.65" y="0.65" width="12.7" height="14.7" fill="#fff" stroke="#000" stroke-width="1.3"/><path d="M2.5 4.5h9M2.5 6.5h9M2.5 8.5h9M2.5 10.5h9M2.5 12.5h9" stroke="#000" stroke-width="1"/></svg>
<svg style="left:717px;top:323px" width="11" height="15" viewBox="0 0 11 15" shape-rendering="crispEdges"><rect x="2" y="2" width="7" height="12" fill="#fff"/><rect x="4" y="0" width="1" height="1" fill="#000"/><rect x="6" y="0" width="1" height="1" fill="#000"/><rect x="0" y="1" width="11" height="2" fill="#000"/><rect x="3" y="1" width="4" height="2" fill="#fff"/><rect x="3" y="1.6" width="4" height="0.7" fill="#bbb"/><rect x="1" y="3" width="1" height="11.4" fill="#000"/><rect x="8" y="3" width="2" height="11.4" fill="#000"/><rect x="7.4" y="3.4" width="0.8" height="2.6" fill="#999"/><rect x="2" y="13.8" width="7" height="1.2" fill="#000"/><rect x="3" y="5" width="1" height="8" fill="#000"/><rect x="5" y="5" width="1" height="7" fill="#000"/></svg>
<svg style="left:111px;top:572px" width="23" height="20" viewBox="0 0 23 20"><ellipse cx="6.2" cy="4.6" rx="3.4" ry="1.3" transform="rotate(45 6.2 4.6)" fill="#fff" stroke="#9c9c9c" stroke-width="0.7"/><path d="M8.2 6.6L12.4 5L18.4 11.4L13 17.2L7 10.8z" fill="#e01010"/><path d="M8.2 6.6L12.4 5L14.6 7.4L9.2 10.4L7 10.8z" fill="#9c1208"/><path d="M10.4 11.2L12.6 13.6L17.6 5.4" stroke="#10108c" stroke-width="1.6" fill="none"/></svg>
<svg style="left:138px;top:572px" width="23" height="20" viewBox="0 0 23 20"><ellipse cx="6.2" cy="4.6" rx="3.4" ry="1.3" transform="rotate(45 6.2 4.6)" fill="#fff" stroke="#9c9c9c" stroke-width="0.7"/><path d="M8.2 6.6L12.4 5L18.4 11.4L13 17.2L7 10.8z" fill="#e01010"/><path d="M8.2 6.6L12.4 5L14.6 7.4L9.2 10.4L7 10.8z" fill="#9c1208"/><path d="M9.6 9.4L15 15.4M15.2 9.4L9.8 15.6" stroke="#10108c" stroke-width="2" fill="none"/><path d="M10 15.4l1.6-1.6M14.8 15.6l-1.4-1.6" stroke="#101030" stroke-width="1.6"/></svg>
<svg style="left:304px;top:531px" width="23" height="20" viewBox="0 0 23 20"><rect x="6.5" y="3.8" width="10.4" height="13" fill="#fbfbff" stroke="#c4c4c4" stroke-width="0.8"/><rect x="6.6" y="3.9" width="10.2" height="3.8" fill="#26dd4c"/><path d="M8.6 9v7M10.8 9v7" stroke="#6a5ad0" stroke-width="1.3" stroke-dasharray="2.2 0.5"/><path d="M12.9 9v7" stroke="#9a8ad8" stroke-width="1" stroke-dasharray="2.2 0.5"/><path d="M14.9 9v7" stroke="#5a5ad8" stroke-width="1.3" stroke-dasharray="2.2 0.5"/><rect x="14.2" y="8.8" width="1.4" height="1.6" fill="#e84040"/></svg>
<svg style="left:10px;top:606px" width="23" height="23" viewBox="0 0 23 23"><path d="M8.4 11.2V6.4H13L15.4 8.6V11.2" fill="#fff" stroke="#4d4d4d" stroke-width="1.2"/><path d="M6.4 17.4V11.6H17.6V17.4z" fill="#ececec" stroke="#4d4d4d" stroke-width="1.3"/><path d="M6.6 14.4H17.4" stroke="#4d4d4d" stroke-width="1"/><path d="M8.4 11.2L6.4 12M15.4 11.2L17.6 12" stroke="#4d4d4d" stroke-width="1"/></svg>
<svg style="left:34px;top:606px" width="23" height="23" viewBox="0 0 23 23"><rect x="4.5" y="6.8" width="15" height="10.4" fill="#dcdcdc" stroke="#8c8c8c" stroke-width="1.1"/><path d="M6.5 12.4h8M6.5 14.6h8" stroke="#8c8c8c" stroke-width="1"/><rect x="14.8" y="8.4" width="3" height="3" fill="#a0a0a0"/></svg>
<svg style="left:58px;top:606px" width="23" height="23" viewBox="0 0 23 23"><path d="M4.4 15.6L10 12.4L19.4 14.6L12.4 19.2z" fill="#d6d6d6" stroke="#c2c2c2" stroke-width="0.8"/><path d="M8.6 15.4L17.2 4.2L19 5.4L11 16.2z" fill="#cfcfcf" stroke="#bdbdbd" stroke-width="0.8"/></svg>
<svg style="left:82px;top:606px" width="23" height="23" viewBox="0 0 23 23"><path d="M8.4 11.2V6.4H12.6L14.6 8.6V11.2" fill="#fff" stroke="#4d4d4d" stroke-width="1.2"/><path d="M6.4 17.4V11.6H17.6V17.4z" fill="#ececec" stroke="#4d4d4d" stroke-width="1.3"/><path d="M6.6 14.6H17.4" stroke="#4d4d4d" stroke-width="1"/><path d="M12 12.6L17.6 5.2" stroke="#4d4d4d" stroke-width="1.3"/><path d="M8 13h4" stroke="#2aa02a" stroke-width="1"/></svg>
<svg style="left:106px;top:606px" width="23" height="23" viewBox="0 0 23 23"><rect x="1" y="1" width="20" height="20" fill="#ebe9dc"/><rect x="4.5" y="4" width="14" height="14" fill="#dcdacb"/><rect x="6.6" y="5.3" width="9.8" height="9.8" fill="#0000ff" stroke="#000" stroke-width="1.3"/><path d="M8.4 10.2L10.6 12.6L14.8 7.6" stroke="#fff" stroke-width="1.8" fill="none"/></svg>
<svg style="left:130px;top:606px" width="23" height="23" viewBox="0 0 23 23"><path d="M5.4 4.6H11.4L14 7.2V14.6H5.4z" fill="#fff" stroke="#000" stroke-width="1.3"/><path d="M8.8 8.4H15L17.6 11V18.6H8.8z" fill="#fff" stroke="#000" stroke-width="1.3"/><path d="M10.6 12.4h5.4M10.6 14.4h5.4M10.6 16.4h5.4" stroke="#000" stroke-width="1.1"/><path d="M6.8 7.6h3" stroke="#000" stroke-width="1"/></svg>
<svg style="left:154px;top:606px" width="23" height="23" viewBox="0 0 23 23"><path d="M4.4 9.4C8 10.6 13 6 18.6 4.2L19.4 13C15 14 10 18.4 5.8 17.8z" fill="#9a9a9a" stroke="#868686" stroke-width="0.8"/><circle cx="9.4" cy="12.6" r="1.6" fill="#c4c4c4"/><circle cx="14.6" cy="9.6" r="1.6" fill="#c4c4c4"/></svg>
<svg style="left:178px;top:606px" width="23" height="23" viewBox="0 0 23 23"><rect x="4.6" y="3.6" width="16" height="17" fill="#000"/><rect x="4.6" y="3.6" width="14.6" height="11.6" fill="#fff"/><rect x="4.6" y="15.2" width="14.6" height="4.4" fill="#c8c8c8"/><rect x="11" y="16.2" width="5.6" height="4.4" fill="#000"/><rect x="12.6" y="17" width="1.4" height="2.6" fill="#d8d8d8"/></svg>
<svg style="left:498px;top:609px" width="14" height="19" viewBox="0 0 14 19"><rect x="1.1" y="1.1" width="9.8" height="11.8" fill="#f4f4f4" stroke="#6a6a6a" stroke-width="1.2"/><path d="M3 4.5h6M3 6.5h6M3 8.5h6M3 10.5h6" stroke="#6a6a6a" stroke-width="1"/><path d="M12.4 13.4V16H8.4" stroke="#8a8a8a" stroke-width="1.1" fill="none"/><path d="M6.6 16L9 14.2V17.8z" fill="#8a8a8a"/></svg>
<span id="t0" style="left:6px;top:5.84px;font-size:12px;color:#000;transform:scaleX(0.8541);">1. Customer Details</span>
<span id="t1" style="left:109px;top:3.84px;font-size:12px;color:#000;transform:scaleX(0.8568);">2. Order Details</span>
<span id="t2" style="left:194px;top:5.84px;font-size:12px;color:#000;transform:scaleX(0.8710);">3. Process Order</span>
<span id="t3" style="left:720px;top:3.69px;font-size:11px;color:#fff;font-weight:bold;transform:scaleX(0.8980);">x</span>
<span id="t4" style="left:6.5px;top:33.30px;font-size:15px;color:#2f6b6f;font-weight:bold;transform:scaleX(1.0068);">Customer Purchase Order</span>
<span id="t5" style="left:12px;top:56.00px;font-size:13px;color:#000;font-weight:bold;transform:scaleX(1.0065);">All Fresh Vegetables</span>
<span id="t6" style="left:375px;top:29.30px;font-size:15px;color:#b01c14;font-weight:bold;transform:scaleX(1.1018);">(New)</span>
<span id="t7" style="left:636px;top:29.84px;font-size:12px;color:#000;transform:scaleX(0.8478);">Date</span>
<span id="t8" style="left:670px;top:29.84px;font-size:12px;color:#000;transform:scaleX(0.9646);">6/18/2015</span>
<span id="t9" style="left:631px;top:50.84px;font-size:12px;color:#000;transform:scaleX(0.9063);">Ref #</span>
<span id="t10" style="left:665px;top:51.84px;font-size:12px;color:#5b8794;transform:scaleX(0.8234);">20</span>
<span id="t11" style="left:629px;top:73.84px;font-size:12px;color:#000;transform:scaleX(0.9138);">PO #</span>
<span id="t12" style="left:665px;top:74.84px;font-size:12px;color:#000;transform:scaleX(0.8234);">15</span>
<span id="t13" style="left:19px;top:97.84px;font-size:12px;color:#2f6b6f;font-weight:bold;transform:scaleX(0.9461);">Customer Billing Address</span>
<span id="t14" style="left:19px;top:113.84px;font-size:12px;color:#000;transform:scaleX(0.8722);">All Fresh Vegetables</span>
<span id="t15" style="left:545px;top:97.84px;font-size:12px;color:#2f6b6f;font-weight:bold;transform:scaleX(0.9531);">Customer Shipping Address</span>
<span id="t16" style="left:545px;top:113.84px;font-size:12px;color:#000;transform:scaleX(0.8722);">All Fresh Vegetables</span>
<span id="t17" style="left:224.5px;top:155.84px;font-size:12px;color:#000;transform:scaleX(0.9184);">Edit</span>
<span id="t18" style="left:506.6px;top:155.84px;font-size:12px;color:#000;transform:scaleX(0.9184);">Edit</span>
<span id="t19" style="left:62.8px;top:176.96px;font-size:9.5px;color:#000;transform:scaleX(0.9678);">Acc #</span>
<span id="t20" style="left:126.6px;top:176.96px;font-size:9.5px;color:#000;transform:scaleX(0.9579);">Sales Rep</span>
<span id="t21" style="left:215px;top:176.96px;font-size:9.5px;color:#000;transform:scaleX(0.9798);">Payment Terms</span>
<span id="t22" style="left:295px;top:176.96px;font-size:9.5px;color:#000;transform:scaleX(0.9214);">Ship date</span>
<span id="t23" style="left:375.3px;top:176.96px;font-size:9.5px;color:#000;transform:scaleX(0.9547);">Expected date</span>
<span id="t24" style="left:463px;top:176.96px;font-size:9.5px;color:#000;transform:scaleX(0.9564);">Cancel Date</span>
<span id="t25" style="left:549px;top:176.96px;font-size:9.5px;color:#000;transform:scaleX(0.9300);">Carrier</span>
<span id="t26" style="left:630.6px;top:176.96px;font-size:9.5px;color:#000;transform:scaleX(0.9653);">Carrier Acc #</span>
<span id="t27" style="left:65px;top:192.84px;font-size:12px;color:#000;transform:scaleX(0.8689);">12345</span>
<span id="t28" style="left:130.4px;top:193.84px;font-size:12px;color:#000;transform:scaleX(0.9792);">N/A</span>
<span id="t29" style="left:218.4px;top:193.84px;font-size:12px;color:#000;transform:scaleX(0.9792);">N/A</span>
<span id="t30" style="left:304px;top:193.84px;font-size:12px;color:#000;transform:scaleX(0.9646);">6/19/2015</span>
<span id="t31" style="left:388px;top:193.84px;font-size:12px;color:#000;transform:scaleX(0.9646);">6/23/2015</span>
<span id="t32" style="left:472px;top:193.84px;font-size:12px;color:#000;transform:scaleX(0.9646);">6/17/2016</span>
<span id="t33" style="left:550.5px;top:193.84px;font-size:12px;color:#000;transform:scaleX(0.9792);">N/A</span>
<span id="t34" style="left:22.4px;top:221.84px;font-size:12px;color:#000;transform:scaleX(0.9168);">SKU #</span>
<span id="t35" style="left:191px;top:221.84px;font-size:12px;color:#000;transform:scaleX(0.9188);">Product</span>
<span id="t36" style="left:317.3px;top:220.84px;font-size:12px;color:#000;transform:scaleX(0.9319);">Qty</span>
<span id="t37" style="left:343px;top:220.84px;font-size:12px;color:#000;transform:scaleX(0.8850);">1</span>
<span id="t38" style="left:382.7px;top:220.84px;font-size:12px;color:#000;transform:scaleX(0.8427);">Add</span>
<span id="t39" style="left:416.3px;top:222.84px;font-size:12px;color:#000;transform:scaleX(0.9034);">Category</span>
<span id="t40" style="left:467.4px;top:220.84px;font-size:12px;color:#000;transform:scaleX(0.8756);">Vegetables</span>
<span id="t41" style="left:24.5px;top:247.84px;font-size:12px;color:#fff;transform:scaleX(0.8473);white-space:pre;">No</span>
<span id="t42" style="left:64.5px;top:247.84px;font-size:12px;color:#fff;transform:scaleX(0.8649);white-space:pre;">SKU #</span>
<span id="t43" style="left:124px;top:247.84px;font-size:12px;color:#fff;transform:scaleX(0.9188);white-space:pre;">Product</span>
<span id="t44" style="left:283px;top:247.84px;font-size:12px;color:#fff;transform:scaleX(0.9305);white-space:pre;">test</span>
<span id="t45" style="right:383px;top:247.84px;font-size:12px;color:#fff;transform:scaleX(0.9640);transform-origin:100% 0;white-space:pre;">Qty</span>
<span id="t46" style="left:375.5px;top:247.84px;font-size:12px;color:#fff;transform:scaleX(0.8998);white-space:pre;">Orig. Pric...</span>
<span id="t47" style="right:261.8px;top:247.84px;font-size:12px;color:#fff;transform:scaleX(0.9241);transform-origin:100% 0;white-space:pre;">Price  $</span>
<span id="t48" style="right:182px;top:247.84px;font-size:12px;color:#fff;transform:scaleX(0.9715);transform-origin:100% 0;white-space:pre;">Total  $</span>
<span id="t49" style="right:124.39999999999998px;top:247.84px;font-size:12px;color:#fff;transform:scaleX(0.9062);transform-origin:100% 0;white-space:pre;">Stock</span>
<span id="t50" style="left:24.5px;top:266.84px;font-size:12px;color:#000;transform:scaleX(0.8850);">1</span>
<span id="t51" style="left:63.5px;top:266.84px;font-size:12px;color:#000;transform:scaleX(0.8701);">V00002</span>
<span id="t52" style="left:122.8px;top:266.84px;font-size:12px;color:#0000ff;transform:scaleX(0.9237);text-decoration:underline;">Cabbage</span>
<span id="t53" style="right:386.5px;top:266.84px;font-size:12px;color:#0000ff;transform:scaleX(0.8850);transform-origin:100% 0;">5</span>
<span id="t54" style="right:321px;top:266.84px;font-size:12px;color:#000;transform:scaleX(0.8990);transform-origin:100% 0;">4.00</span>
<span id="t55" style="right:264px;top:266.84px;font-size:12px;color:#0000ff;transform:scaleX(0.8990);transform-origin:100% 0;">4.00</span>
<span id="t56" style="right:182.70000000000005px;top:266.84px;font-size:12px;color:#000;transform:scaleX(0.8850);transform-origin:100% 0;">20.00</span>
<span id="t57" style="right:124.79999999999995px;top:266.84px;font-size:12px;color:#000;transform:scaleX(0.8850);transform-origin:100% 0;">1001</span>
<span id="t58" style="left:24.5px;top:285.84px;font-size:12px;color:#000;transform:scaleX(0.8850);">2</span>
<span id="t59" style="left:63.5px;top:285.84px;font-size:12px;color:#000;transform:scaleX(0.8701);">V00007</span>
<span id="t60" style="left:122.8px;top:285.84px;font-size:12px;color:#0000ff;transform:scaleX(0.9658);text-decoration:underline;">Carrots</span>
<span id="t61" style="right:386.5px;top:285.84px;font-size:12px;color:#0000ff;transform:scaleX(0.8850);transform-origin:100% 0;">13</span>
<span id="t62" style="right:321px;top:285.84px;font-size:12px;color:#000;transform:scaleX(0.8990);transform-origin:100% 0;">4.00</span>
<span id="t63" style="right:264px;top:285.84px;font-size:12px;color:#0000ff;transform:scaleX(0.8990);transform-origin:100% 0;">4.00</span>
<span id="t64" style="right:182.70000000000005px;top:285.84px;font-size:12px;color:#000;transform:scaleX(0.8850);transform-origin:100% 0;">52.00</span>
<span id="t65" style="right:124.79999999999995px;top:285.84px;font-size:12px;color:#000;transform:scaleX(0.8850);transform-origin:100% 0;">999</span>
<span id="t66" style="left:24.5px;top:304.84px;font-size:12px;color:#000;transform:scaleX(0.8850);">3</span>
<span id="t67" style="left:63.5px;top:304.84px;font-size:12px;color:#000;transform:scaleX(0.8701);">V00010</span>
<span id="t68" style="left:122.8px;top:304.84px;font-size:12px;color:#0000ff;transform:scaleX(0.9393);text-decoration:underline;">Cucumber</span>
<span id="t69" style="right:386.5px;top:304.84px;font-size:12px;color:#0000ff;transform:scaleX(0.8850);transform-origin:100% 0;">58</span>
<span id="t70" style="right:321px;top:304.84px;font-size:12px;color:#000;transform:scaleX(0.8990);transform-origin:100% 0;">4.00</span>
<span id="t71" style="right:264px;top:304.84px;font-size:12px;color:#0000ff;transform:scaleX(0.8990);transform-origin:100% 0;">4.00</span>
<span id="t72" style="right:182.70000000000005px;top:304.84px;font-size:12px;color:#000;transform:scaleX(0.8850);transform-origin:100% 0;">232.00</span>
<span id="t73" style="right:124.79999999999995px;top:304.84px;font-size:12px;color:#000;transform:scaleX(0.8850);transform-origin:100% 0;">800</span>
<span id="t74" style="left:24.5px;top:323.84px;font-size:12px;color:#000;transform:scaleX(0.8850);">4</span>
<span id="t75" style="left:63.5px;top:323.84px;font-size:12px;color:#000;transform:scaleX(0.8701);">V00005</span>
<span id="t76" style="left:122.8px;top:323.84px;font-size:12px;color:#0000ff;transform:scaleX(1.0209);text-decoration:underline;">Garlic</span>
<span id="t77" style="right:386.5px;top:323.84px;font-size:12px;color:#0000ff;transform:scaleX(0.8850);transform-origin:100% 0;">9</span>
<span id="t78" style="right:321px;top:323.84px;font-size:12px;color:#000;transform:scaleX(0.8990);transform-origin:100% 0;">4.00</span>
<span id="t79" style="right:264px;top:323.84px;font-size:12px;color:#0000ff;transform:scaleX(0.8990);transform-origin:100% 0;">4.00</span>
<span id="t80" style="right:182.70000000000005px;top:323.84px;font-size:12px;color:#000;transform:scaleX(0.8850);transform-origin:100% 0;">36.00</span>
<span id="t81" style="right:124.79999999999995px;top:323.84px;font-size:12px;color:#000;transform:scaleX(0.8850);transform-origin:100% 0;">500</span>
<span id="t82" style="left:21.5px;top:536.84px;font-size:12px;color:#000;transform:scaleX(0.9254);">Total Weight:</span>
<span id="t83" style="left:95.3px;top:536.84px;font-size:12px;color:#2f6b6f;transform:scaleX(0.8707);">170 lbs</span>
<span id="t84" style="left:37.5px;top:552.84px;font-size:12px;color:#000;transform:scaleX(0.9470);">Total Qty:</span>
<span id="t85" style="left:95.3px;top:552.84px;font-size:12px;color:#2f6b6f;transform:scaleX(0.8009);">85</span>
<span id="t86" style="left:22.8px;top:575.84px;font-size:12px;color:#a0a0a0;transform:scaleX(0.8640);">Enter Discount</span>
<span id="t87" style="left:247.3px;top:537.27px;font-size:11.5px;color:#000;transform:scaleX(0.8110);">%</span>
<span id="t88" style="right:450px;top:536.84px;font-size:12px;color:#000;transform:scaleX(0.8562);transform-origin:100% 0;">0.00</span>
<span id="t89" style="left:346.4px;top:536.84px;font-size:12px;color:#000;transform:scaleX(0.8639);">Shipping $</span>
<span id="t90" style="right:307.7px;top:536.84px;font-size:12px;color:#000;transform:scaleX(0.8562);transform-origin:100% 0;">0.00</span>
<span id="t91" style="left:367.7px;top:561.84px;font-size:12px;color:#000;transform:scaleX(0.8566);">Tax %</span>
<span id="t92" style="left:402.4px;top:561.84px;font-size:12px;color:#000;transform:scaleX(0.9493);">N/A</span>
<span id="t93" style="left:465px;top:536.84px;font-size:12px;color:#000;transform:scaleX(0.8637);">Adjustment $</span>
<span id="t94" style="right:161.29999999999995px;top:536.84px;font-size:12px;color:#000;transform:scaleX(0.8562);transform-origin:100% 0;">0.00</span>
<span id="t95" style="left:501.4px;top:561.84px;font-size:12px;color:#000;transform:scaleX(0.8366);">Tax $</span>
<span id="t96" style="right:161.29999999999995px;top:561.84px;font-size:12px;color:#000;transform:scaleX(0.8562);transform-origin:100% 0;">0.00</span>
<span id="t97" style="left:600.4px;top:536.84px;font-size:12px;color:#000;transform:scaleX(0.8859);">Sub Total $</span>
<span id="t98" style="right:17.299999999999955px;top:536.84px;font-size:12px;color:#000;transform:scaleX(0.8800);transform-origin:100% 0;">340.00</span>
<span id="t99" style="left:607px;top:561.34px;font-size:12px;color:#2f6b6f;font-weight:bold;transform:scaleX(0.9510);">TOTAL $</span>
<span id="t100" style="right:17.299999999999955px;top:560.84px;font-size:12px;color:#2f6b6f;font-weight:bold;transform:scaleX(1.0353);transform-origin:100% 0;">340.00</span>
<span id="t101" style="left:593px;top:584.84px;font-size:12px;color:#2f6b6f;font-weight:bold;transform:scaleX(0.9028);">BALANCE $</span>
<span id="t102" style="right:17.299999999999955px;top:581.84px;font-size:12px;color:#2f6b6f;font-weight:bold;transform:scaleX(1.0353);transform-origin:100% 0;">340.00</span>
<span id="t103" style="left:458.2px;top:610.84px;font-size:12px;color:#000;transform:scaleX(0.9138);">Save</span>
<span id="t104" style="left:514px;top:609.84px;font-size:12px;color:#a6a6a6;font-weight:bold;transform:scaleX(0.9901);word-spacing:-2px;">PLACE ORDER</span>
<span id="t105" style="left:616.4px;top:610.84px;font-size:12px;color:#000;transform:scaleX(0.9247);">Cancel Order</span>
<span id="t106" style="left:702px;top:610.84px;font-size:12px;color:#000;transform:scaleX(0.9450);">Close</span>
<span id="t107" style="left:28.8px;top:632.84px;font-size:12px;color:#000;transform:scaleX(0.9056);">Print Queue</span>
<span id="t108" style="left:108.6px;top:632.84px;font-size:12px;color:#000;transform:scaleX(0.9238);">Invoice Only</span>
<span id="t109" style="left:190.7px;top:632.84px;font-size:12px;color:#000;transform:scaleX(0.9008);">Print Item Notes</span>
<span id="t110" style="left:592.2px;top:219.44px;font-size:12px;color:#000;font-weight:bold;transform:scaleX(0.8715);">?</span>
<span id="t111" style="left:637.2px;top:247.84px;font-size:12px;color:#fff;font-weight:bold;transform:scaleX(0.4929);font-family:"Liberation Mono","DejaVu Sans Mono",monospace;">BOM</span>
<span id="t112" style="left:186.8px;top:609.57px;font-size:11.5px;color:#b4003c;font-weight:bold;transform:scaleX(0.9829);">Q</span>
</div></body></html>
